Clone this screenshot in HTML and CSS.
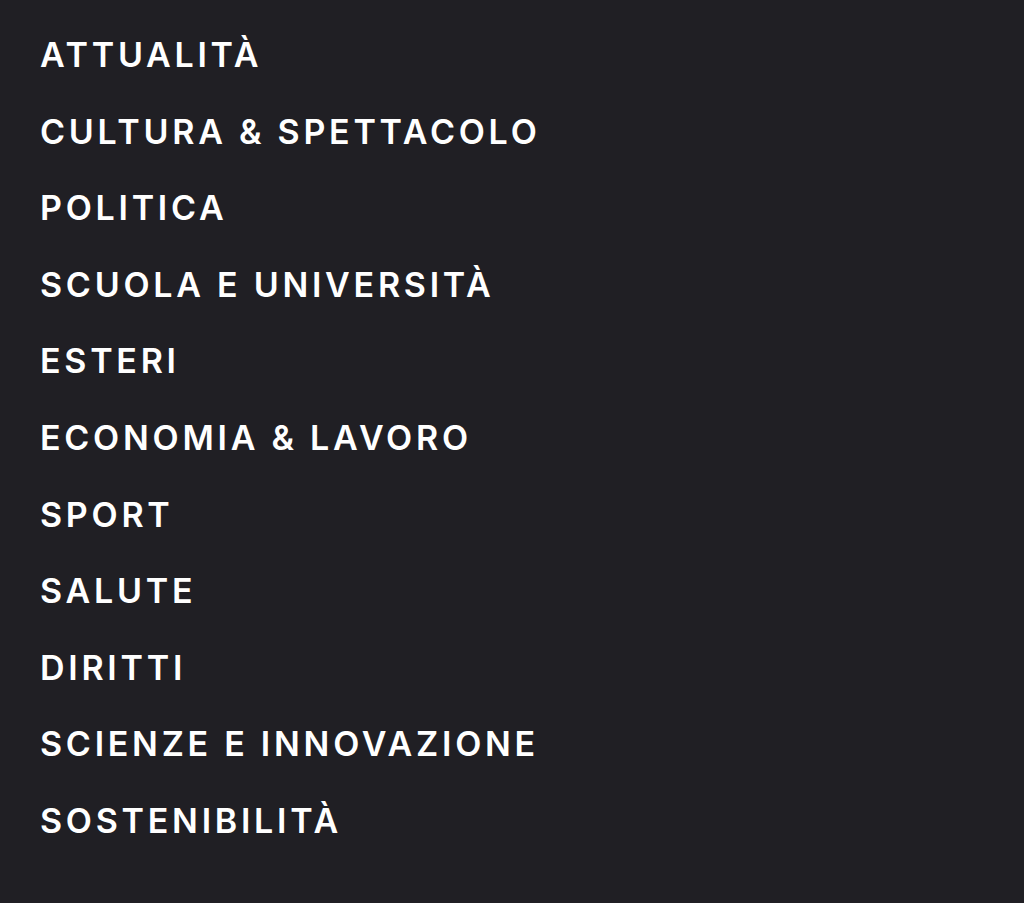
FILE: index.html
```html
<!DOCTYPE html>
<html lang="it">
<head>
<meta charset="utf-8">
<link rel="stylesheet" href="styles.css">
</head>
<body>
<nav class="menu">
  <ul class="menu-list">
    <li><a href="#">ATTUALITÀ</a></li>
    <li><a href="#">CULTURA &amp; SPETTACOLO</a></li>
    <li><a href="#">POLITICA</a></li>
    <li><a href="#">SCUOLA E UNIVERSITÀ</a></li>
    <li><a href="#">ESTERI</a></li>
    <li><a href="#">ECONOMIA &amp; LAVORO</a></li>
    <li><a href="#">SPORT</a></li>
    <li><a href="#">SALUTE</a></li>
    <li><a href="#">DIRITTI</a></li>
    <li><a href="#">SCIENZE E INNOVAZIONE</a></li>
    <li><a href="#">SOSTENIBILITÀ</a></li>
  </ul>
</nav>
</body>
</html>
```
FILE: styles.css
```css
html, body {
  margin: 0;
  padding: 0;
  background: #201f24;
  height: 100%;
}
.menu {
  padding: 33px 0 0 40px;
}
.menu-list {
  list-style: none;
  margin: 0;
  padding: 0;
  display: flex;
  flex-direction: column;
}
.menu-list li {
  height: 76.6px;
  display: flex;
  align-items: flex-start;
}
.menu-list a {
  color: #ffffff;
  text-decoration: none;
  font-family: Inter, "Noto Sans", sans-serif;
  font-weight: 600;
  font-size: 34px;
  line-height: 44px;
  letter-spacing: 0.11em;
}
```
